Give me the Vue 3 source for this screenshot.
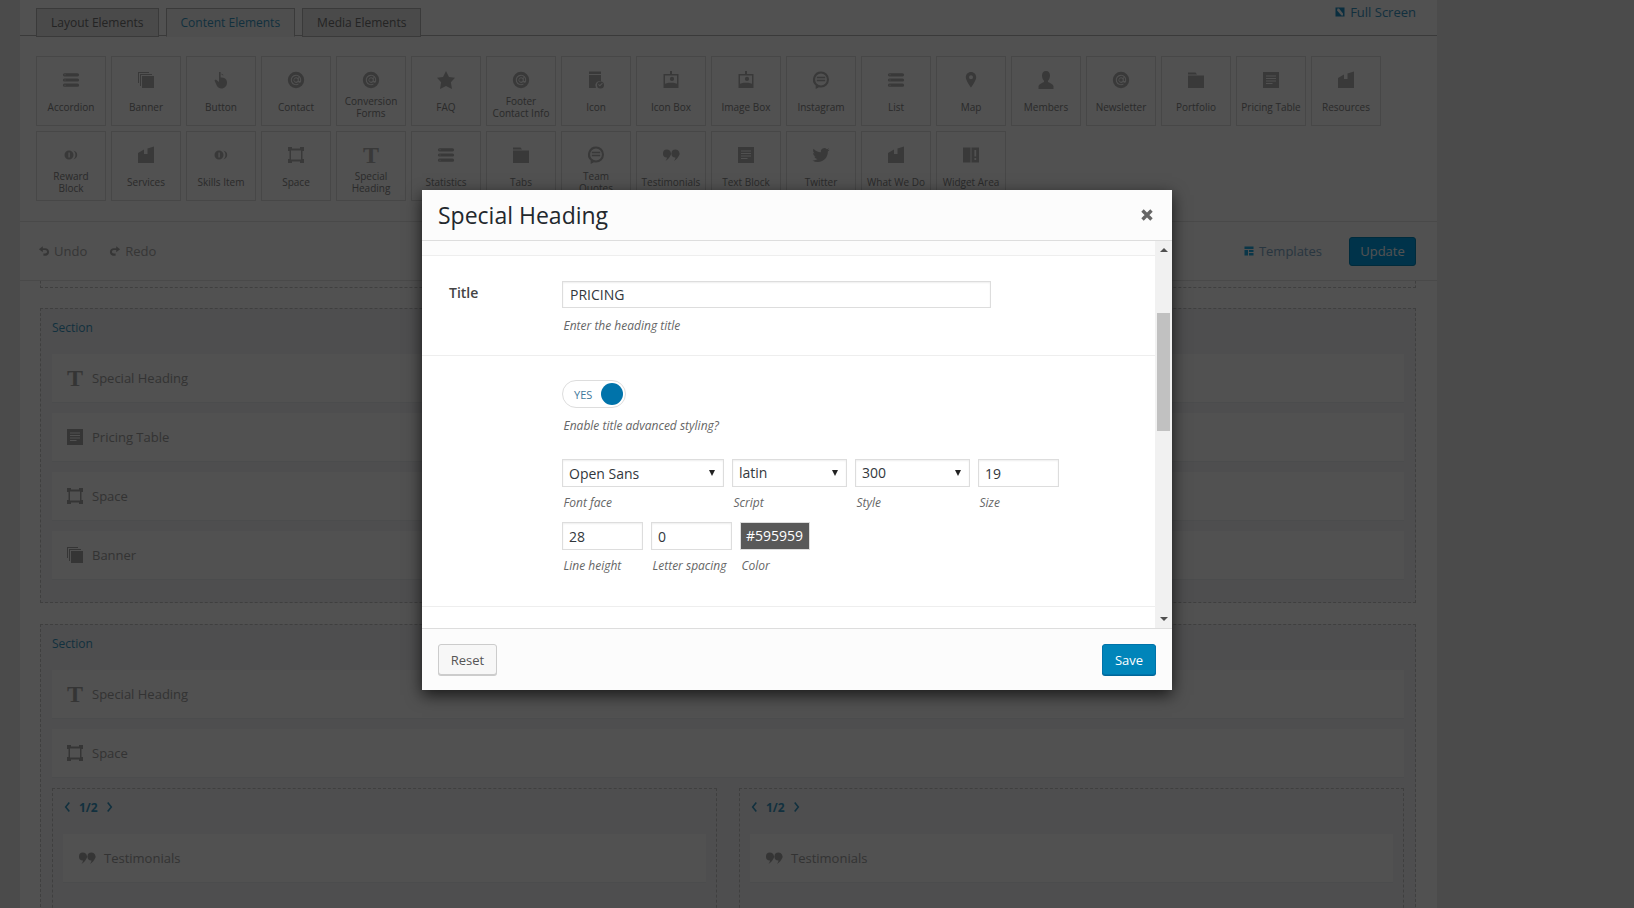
<template>
  <div class="page">
    <div class="wrap">
      <!-- element tabs -->
      <div class="tabs">
        <a v-for="t in tabs" :key="t" class="tab" :class="{ active: t === 'Content Elements' }">{{ t }}</a>
        <a class="fullscreen">
          <svg class="fs-icon" viewBox="0 0 20 20"><path fill-rule="evenodd" :d="icons.fullscreen" /></svg>
          Full Screen
        </a>
      </div>

      <!-- element picker -->
      <div class="elements">
        <div v-for="el in elements" :key="el.label" class="tile">
          <span class="tile-icon">
            <svg v-if="el.icon === 't'" viewBox="0 0 20 20"><text x="10" y="17.5" class="t-glyph">T</text></svg>
            <svg v-else :viewBox="boxes[el.icon] || '0 0 20 20'"><path fill-rule="evenodd" :d="icons[el.icon]" /></svg>
          </span>
          <span class="tile-label">{{ el.label }}</span>
        </div>
      </div>

      <!-- undo / redo / save -->
      <div class="toolbar">
        <a class="hist">
          <svg viewBox="0 0 20 20"><path :d="icons.undo" /></svg>
          Undo
        </a>
        <a class="hist">
          <svg class="flip" viewBox="0 0 20 20"><path :d="icons.undo" /></svg>
          Redo
        </a>
        <a class="templates">
          <svg viewBox="0 0 20 20"><path :d="icons.templates" /></svg>
          Templates
        </a>
        <button class="update">Update</button>
      </div>

      <!-- page layout -->
      <div class="prev-section"></div>
      <div class="section">
        <div class="section-title">Section</div>
        <div class="stack">
          <div v-for="r in firstSection" :key="r.label" class="row">
            <svg v-if="r.icon === 't'" viewBox="0 0 20 20"><text x="10" y="17.5" class="t-glyph">T</text></svg>
            <svg v-else viewBox="0 0 20 20"><path fill-rule="evenodd" :d="icons[r.icon]" /></svg>
            {{ r.label }}
          </div>
        </div>
      </div>
      <div class="section">
        <div class="section-title">Section</div>
        <div class="stack">
          <div v-for="r in secondSection" :key="r.label" class="row">
            <svg v-if="r.icon === 't'" viewBox="0 0 20 20"><text x="10" y="17.5" class="t-glyph">T</text></svg>
            <svg v-else viewBox="0 0 20 20"><path fill-rule="evenodd" :d="icons[r.icon]" /></svg>
            {{ r.label }}
          </div>
        </div>
        <div class="columns">
          <div v-for="c in 2" :key="c" class="column">
            <div class="col-size">
              <svg viewBox="0 0 10 12"><path d="M7 1L3 6l4 5" /></svg>
              <b>1/2</b>
              <svg viewBox="0 0 10 12"><path d="M3 1l4 5-4 5" /></svg>
            </div>
            <div class="row">
              <svg viewBox="0 0 20 20"><path fill-rule="evenodd" :d="icons.quote" /></svg>
              Testimonials
            </div>
          </div>
        </div>
      </div>
    </div>

    <!-- modal -->
    <div class="overlay"></div>
    <div class="modal">
      <div class="modal-head">
        <h2>Special Heading</h2>
        <svg class="close" viewBox="0 0 12 12"><path d="M1.500 1.500l9 9M10.500 1.500l-9 9" /></svg>
      </div>
      <div class="modal-body">
        <div class="form">
          <div class="strip"></div>
          <div class="field first">
            <label>Title</label>
            <div>
              <input class="title-input" value="PRICING" />
              <p class="help title-help">Enter the heading title</p>
            </div>
          </div>
          <div class="field second">
            <label></label>
            <div>
              <div class="toggle"><span>YES</span><i></i></div>
              <p class="help toggle-help">Enable title advanced styling?</p>
              <div class="opts">
                <div v-for="o in topOptions" :key="o.label" class="opt" :style="{ width: o.width + 'px' }">
                  <div v-if="o.select" class="select" :class="{ lifted: o.label !== 'Font face' }">
                    <span>{{ o.value }}</span><i></i>
                  </div>
                  <input v-else :value="o.value" />
                  <p class="help">{{ o.label }}</p>
                </div>
              </div>
              <div class="opts second-opts">
                <div class="opt w81"><input value="28" /><p class="help">Line height</p></div>
                <div class="opt w81"><input value="0" /><p class="help">Letter spacing</p></div>
                <div class="opt w69"><div class="swatch">#595959</div><p class="help">Color</p></div>
              </div>
            </div>
          </div>
        </div>
        <div class="scrollbar">
          <i class="up"></i>
          <div class="thumb"></div>
          <i class="down"></i>
        </div>
      </div>
      <div class="modal-foot">
        <button class="reset">Reset</button>
        <button class="save">Save</button>
      </div>
    </div>
  </div>
</template>

<script setup>
const tabs = ['Layout Elements', 'Content Elements', 'Media Elements']

const boxes = {
  twitter: '-2 -2 28 28',
  email: '-1 -1 22 22'
}

const pill = (y) => `M3.500 ${y}H16.500a1.500 1.500 0 010 3.200H3.500a1.500 1.500 0 010-3.200z M3.600 ${y + 1.1}h.9v1h-.9z`

const icons = {
  fullscreen: 'M1 1h18v18H1z M5 3h3l8 10v4h-3L4 7z',
  bars: pill(3.200) + ' ' + pill(8.400) + ' ' + pill(13.600),
  pages: 'M2 2h11v1H3v10H2z M4 4h12v1H5v11H4z M6 6h12v12H6z',
  hand: 'M8 2h1.600v5.500c3.300 0 6.400 1.200 6.400 5 0 3.500-2.500 6-5.500 6-2.200 0-3.500-1-4.500-2.500L3.500 10.500l1.300-1L8 12z M10.500 3.500l2 1.400-.4.700-1.600-1z',
  email: 'M10 1a9 9 0 100 18 9 9 0 000-18z M10 4.300a5.700 5.700 0 103 10.500l-.5-.9a4.600 4.600 0 112.100-3.900c0 .8-.3 1.200-.8 1.200s-.7-.4-.7-1V7h-1v.7a3 3 0 10.200 4.500c.3.6.800.900 1.500.900 1.100 0 1.900-.9 1.900-2.300a5.700 5.700 0 00-5.700-6.500z M10 8a2 2 0 110 4 2 2 0 010-4z',
  star: 'M10 1l3 6 6 .750-4.120 4.620L16 19l-6-3-6 3 1.130-6.630L1 7.750 7 7z',
  file: 'M3 1.500h12V4H3z M3 5h12v6.200A4.500 4.500 0 0010 18H3z M14.500 11.500a3.500 3.500 0 110 7 3.500 3.500 0 010-7z M13.800 16.400l3-3-.7-.7-2.300 2.300-1-1-.7.7z',
  image: 'M9 1h2v3h6.500v14h-15V4H9z M4 5.500v8.300l3.500-1h5l3.500 1V5.500z M11 6.800a2 2 0 110 4.200 2 2 0 010-4.200z',
  chat: 'M10 1.500a8 8 0 00-5.300 14V19l3.300-1.700c.6.200 1.300.200 2 .200a8 8 0 000-16z M10 3.600a5.900 5.900 0 110 11.800 5.900 5.900 0 010-11.800z M5.800 6.800h8.400v1.400H5.800z M5.800 9.800h8.400v1.400H5.800z',
  pin: 'M10 2C7 2 4.800 4.300 4.800 7.200c0 3.500 5.200 10.300 5.200 10.300s5.200-6.800 5.200-10.300C15.200 4.300 13 2 10 2z M10 5.200a2 2 0 110 4 2 2 0 010-4z',
  person: 'M10 1C7.400 1 6 3 6 5.500c0 2 .8 4 2 5.200V12c-2 1-5 2-5.500 4v3h15v-3c-.5-2-3.500-3-5.500-4v-1.300c1.200-1.200 2-3.200 2-5.200C14 3 12.600 1 10 1z',
  folder: 'M2 2.500h7.500L11 4.600H2z M2 5.500h16V18H2z',
  text: 'M2 2h16v16H2z M5 5.500h10v1H5z M5 8h10v1H5z M5 10.500h10v1H5z M5 13h6.500v1H5z',
  book: 'M2 8l6-3.500V9h3.500V3.500L18 1.500V18H2z',
  coin: 'M8 5.500a4.500 4.500 0 100 9 4.500 4.500 0 000-9z M7.400 7.500h1.400v5H7.400z M12.400 5.600c2.200.6 3.800 2.200 3.800 4.400s-1.600 3.800-3.800 4.400c1.300-1.200 2-2.600 2-4.400s-.7-3.200-2-4.400z',
  space: 'M2 2h4v1.500h8V2h4v4h-1.500v8H18v4h-4v-1.500H6V18H2v-4h1.500V6H2z M5 5.500v9h10v-9z',
  quote: 'M6 4.500a4 4 0 013.500 6c-1 2.200-2.500 4-5 5.500 1-1.500 1.500-2.500 1.400-3.500A4 4 0 016 4.500z M14.500 4.500a4 4 0 013.500 6c-1 2.200-2.500 4-5 5.500 1-1.500 1.500-2.500 1.400-3.500a4 4 0 01.1-8z',
  twitter: 'M23.950 4.570a10 10 0 01-2.820.770 4.960 4.960 0 002.160-2.720c-.950.550-2 .960-3.130 1.200a4.920 4.920 0 00-8.380 4.480C7.690 8.100 4.070 6.130 1.640 3.160a4.820 4.820 0 00-.670 2.480c0 1.710.870 3.210 2.190 4.100a4.900 4.900 0 01-2.230-.610v.060c0 2.390 1.700 4.380 3.950 4.830-.410.110-.850.170-1.300.170-.310 0-.620-.030-.920-.080.630 1.960 2.440 3.380 4.600 3.420A9.870 9.870 0 010 19.540a13.940 13.940 0 007.550 2.210c9.050 0 14-7.500 14-13.980 0-.210 0-.420-.020-.630a9.940 9.940 0 002.460-2.550z',
  widget: 'M2 2.500h7.500v15H2z M10.500 2.500H18v15h-7.500z M13.400 5h1.800v6.500h-1.800z M13.400 13h1.800v2h-1.800z',
  undo: 'M12 5.500H8V2L1.500 7l6.500 5V8.500h4c1.700 0 3 1.200 3 2.800S13.700 14 12 14H9v4h3c3.800 0 6.500-2.900 6.500-6.500S15.800 5.500 12 5.500z',
  templates: 'M1 1h18v5H1z M1 8h7v11H1z M10 8h9v4h-9z M10 14h9v5h-9z'
}

const elements = [
  { label: 'Accordion', icon: 'bars' },
  { label: 'Banner', icon: 'pages' },
  { label: 'Button', icon: 'hand' },
  { label: 'Contact', icon: 'email' },
  { label: 'Conversion\nForms', icon: 'email' },
  { label: 'FAQ', icon: 'star' },
  { label: 'Footer\nContact Info', icon: 'email' },
  { label: 'Icon', icon: 'file' },
  { label: 'Icon Box', icon: 'image' },
  { label: 'Image Box', icon: 'image' },
  { label: 'Instagram', icon: 'chat' },
  { label: 'List', icon: 'bars' },
  { label: 'Map', icon: 'pin' },
  { label: 'Members', icon: 'person' },
  { label: 'Newsletter', icon: 'email' },
  { label: 'Portfolio', icon: 'folder' },
  { label: 'Pricing Table', icon: 'text' },
  { label: 'Resources', icon: 'book' },
  { label: 'Reward\nBlock', icon: 'coin' },
  { label: 'Services', icon: 'book' },
  { label: 'Skills Item', icon: 'coin' },
  { label: 'Space', icon: 'space' },
  { label: 'Special\nHeading', icon: 't' },
  { label: 'Statistics', icon: 'bars' },
  { label: 'Tabs', icon: 'folder' },
  { label: 'Team\nQuotes', icon: 'chat' },
  { label: 'Testimonials', icon: 'quote' },
  { label: 'Text Block', icon: 'text' },
  { label: 'Twitter', icon: 'twitter' },
  { label: 'What We Do', icon: 'book' },
  { label: 'Widget Area', icon: 'widget' }
]

const firstSection = [
  { label: 'Special Heading', icon: 't' },
  { label: 'Pricing Table', icon: 'text' },
  { label: 'Space', icon: 'space' },
  { label: 'Banner', icon: 'pages' }
]

const secondSection = [
  { label: 'Special Heading', icon: 't' },
  { label: 'Space', icon: 'space' }
]

const topOptions = [
  { label: 'Font face', value: 'Open Sans', width: 162, select: true },
  { label: 'Script', value: 'latin', width: 115, select: true },
  { label: 'Style', value: '300', width: 115, select: true },
  { label: 'Size', value: '19', width: 81, select: false }
]
</script>

<style scoped>
.page {
  position: relative;
  height: 100vh;
  overflow: hidden;
  background: #e8e8e8;
  font-family: "Open Sans", "Liberation Sans", sans-serif;
  color: #999;
}
.wrap {
  width: 1417px;
  height: 100%;
  margin-left: 20px;
  overflow: hidden;
  background: #fafafa;
}
svg {
  overflow: visible;
}

/* tabs */
.tabs {
  display: flex;
  gap: 7px;
  height: 35px;
  padding: 0 21px 0 16px;
  border-bottom: 1px solid #b5b5b5;
}
.tab {
  margin-top: 8px;
  height: 27px;
  margin-bottom: -1px;
  padding: 0 14px;
  border: 1px solid #b5b5b5;
  background: #e5e5e5;
  color: #707070;
  font-size: 12px;
  line-height: 28px;
}
.tab.active {
  background: #f1f1f1;
  border-bottom-color: #f1f1f1;
  color: #3a97c2;
}
.fullscreen {
  display: flex;
  align-items: center;
  gap: 5px;
  height: 24px;
  margin-left: auto;
  color: #3a97c2;
  font-size: 13px;
}
.fs-icon {
  width: 10px;
  height: 10px;
  fill: #1f8fc4;
}

/* element picker */
.elements {
  display: flex;
  flex-wrap: wrap;
  gap: 5px;
  padding: 20px 40px 20px 16px;
  border-bottom: 1px solid #e4e4e4;
}
.tile {
  box-sizing: border-box;
  width: 70px;
  height: 70px;
  border: 1px solid #dcdcdc;
  display: flex;
  flex-direction: column;
  align-items: center;
}
.tile-icon {
  height: 20px;
  margin-top: 13px;
}
.tile-icon svg {
  display: block;
  width: 20px;
  height: 20px;
  fill: #b0b0b0;
}
.tile-label {
  display: flex;
  align-items: center;
  height: 24px;
  margin-top: 5px;
  color: #858585;
  font-size: 10px;
  line-height: 12px;
  text-align: center;
  white-space: pre-line;
}
.t-glyph {
  font-family: "Liberation Serif", serif;
  font-size: 24px;
  font-weight: 700;
  text-anchor: middle;
}

/* toolbar */
.toolbar {
  display: flex;
  align-items: center;
  height: 58px;
  padding: 0 21px 0 18px;
  border-bottom: 1px solid #e4e4e4;
}
.hist {
  display: flex;
  align-items: center;
  gap: 4px;
  margin-right: 22px;
  color: #a9a9a9;
  font-size: 13px;
}
.hist svg {
  width: 12px;
  height: 12px;
  fill: #a9a9a9;
}
.flip {
  transform: scaleX(-1);
}
.templates {
  display: flex;
  align-items: center;
  gap: 5px;
  margin-left: auto;
  margin-right: 27px;
  color: #7fa8c8;
  font-size: 13px;
}
.templates svg {
  width: 10px;
  height: 10px;
  fill: #1fa8e0;
}
.update {
  width: 67px;
  height: 29px;
  border: 1px solid #0085ba;
  border-radius: 3px;
  background: #009ee6;
  color: #fff;
  font: 13px "Open Sans", sans-serif;
}

/* sections */
.prev-section {
  height: 6px;
  margin: 0 21px 0 20px;
  border: 1px dashed #c5c5c5;
  border-top: 0;
}
.section {
  margin: 20px 21px 21px 20px;
  padding: 11px 11px 23px;
  border: 1px dashed #c5c5c5;
  background: #f2f3f5;
}
.section-title {
  margin-bottom: 18px;
  color: #3a97c2;
  font-size: 12px;
  line-height: 16px;
}
.stack {
  display: flex;
  flex-direction: column;
  gap: 11px;
}
.row {
  display: flex;
  align-items: center;
  gap: 7px;
  box-sizing: border-box;
  height: 48px;
  padding-left: 13px;
  background: #fafafa;
  box-shadow: 0 1px 0 #e9ebee;
  color: #a0a0a0;
  font-size: 13px;
}
.row svg {
  width: 20px;
  height: 20px;
  fill: #a6a6a6;
}
.columns {
  display: flex;
  gap: 22px;
  margin-top: 11px;
}
.column {
  flex: 1;
  padding: 10px 10px 40px;
  border: 1px dashed #c5c5c5;
}
.column .row {
  padding-left: 14px;
}
.col-size {
  display: flex;
  align-items: center;
  gap: 7px;
  height: 16px;
  margin-bottom: 19px;
  color: #3a97c2;
  font-size: 12px;
}
.col-size svg {
  width: 9px;
  height: 12px;
  fill: none;
  stroke: #3a97c2;
  stroke-width: 1.8;
}

/* modal */
.overlay {
  position: absolute;
  inset: 0;
  background: rgba(0, 0, 0, 0.68);
}
.modal {
  position: absolute;
  left: 422px;
  top: 190px;
  display: flex;
  flex-direction: column;
  width: 750px;
  height: 500px;
  background: #fff;
  box-shadow: 0 5px 15px rgba(0, 0, 0, 0.7);
  color: #32373c;
}
.modal-head {
  display: flex;
  align-items: center;
  justify-content: space-between;
  box-sizing: border-box;
  height: 51px;
  padding: 0 19px 0 16px;
  background: #fcfcfc;
  border-bottom: 1px solid #ddd;
}
.modal-head h2 {
  margin: 0;
  color: #23282d;
  font-size: 23px;
  font-weight: 400;
}
.close {
  width: 12px;
  height: 12px;
  fill: none;
  stroke: #666;
  stroke-width: 3.4;
}
.modal-body {
  flex: 1;
  display: flex;
  min-height: 0;
}
.form {
  flex: 1;
  overflow: hidden;
}
.strip {
  height: 14px;
  border-bottom: 1px solid #eee;
  background: #fcfcfc;
}
.field {
  display: grid;
  grid-template-columns: 113px 1fr;
  padding-left: 27px;
  border-bottom: 1px solid #eee;
}
.field.first {
  padding-top: 25px;
  padding-bottom: 21px;
}
.field.second {
  padding-top: 24px;
  padding-bottom: 32px;
}
.field label {
  color: #444;
  font-size: 14px;
  font-weight: 600;
  line-height: 24px;
}
input,
.select,
.swatch {
  display: block;
  box-sizing: border-box;
  width: 100%;
  height: 28px;
  margin: 0;
  padding: 0 6px;
  border: 1px solid #ddd;
  border-radius: 0;
  outline: none;
  box-shadow: inset 0 1px 2px rgba(0, 0, 0, 0.07);
  background: #fff;
  color: #32373c;
  font: 14px "Open Sans", sans-serif;
}
.title-input {
  width: 429px;
  height: 27px;
  padding-left: 7px;
}
.help {
  margin: 8px 0 0 1.5px;
  color: #666;
  font-size: 12px;
  font-style: italic;
  line-height: 16px;
}
.title-help {
  margin-top: 10px;
}
.toggle {
  display: flex;
  align-items: center;
  justify-content: space-between;
  box-sizing: border-box;
  width: 64px;
  height: 28px;
  padding: 0 2px 0 11px;
  border: 1px solid #ddd;
  border-radius: 14px;
  color: #40789b;
  font-size: 11px;
}
.toggle i {
  width: 22px;
  height: 22px;
  border-radius: 50%;
  background: #0073aa;
}
.toggle-help {
  margin-top: 10px;
}
.opts {
  display: flex;
  gap: 8px;
  margin-top: 25px;
}
.second-opts {
  margin-top: 11px;
}
.w81 {
  width: 81px;
}
.w69 {
  width: 70px;
}
.select {
  display: flex;
  align-items: center;
  justify-content: space-between;
  padding: 0 8px 0 6px;
}
.select.lifted span {
  margin-top: -1px;
}
.select i {
  border-left: 3.5px solid transparent;
  border-right: 3.5px solid transparent;
  border-top: 6px solid #222;
}
.swatch {
  background: #595959;
  color: #fff;
  line-height: 25px;
  padding: 0 5px;
  box-shadow: none;
}
.scrollbar {
  position: relative;
  width: 17px;
  background: #f1f1f1;
}
.thumb {
  width: 13px;
  height: 118px;
  margin: 72px 0 0 2px;
  background: #c1c1c1;
}
.up,
.down {
  position: absolute;
  left: 4.5px;
  border-left: 4px solid transparent;
  border-right: 4px solid transparent;
}
.up {
  top: 7px;
  border-bottom: 4px solid #505050;
}
.down {
  bottom: 7px;
  border-top: 4px solid #505050;
}
.modal-foot {
  display: flex;
  align-items: center;
  justify-content: space-between;
  box-sizing: border-box;
  height: 62px;
  padding: 0 16px;
  background: #fcfcfc;
  border-top: 1px solid #ddd;
}
.reset,
.save {
  height: 31px;
  border-radius: 3px;
  font: 13px "Open Sans", sans-serif;
}
.reset {
  width: 59px;
  border: 1px solid #ccc;
  box-shadow: 0 1px 0 #ccc;
  background: #f7f7f7;
  color: #555;
}
.save {
  width: 54px;
  border: 1px solid #0073aa;
  box-shadow: 0 1px 0 #006799;
  background: #0085ba;
  color: #fff;
}
</style>

<style>
body {
  margin: 0;
  overflow: hidden;
}
</style>
